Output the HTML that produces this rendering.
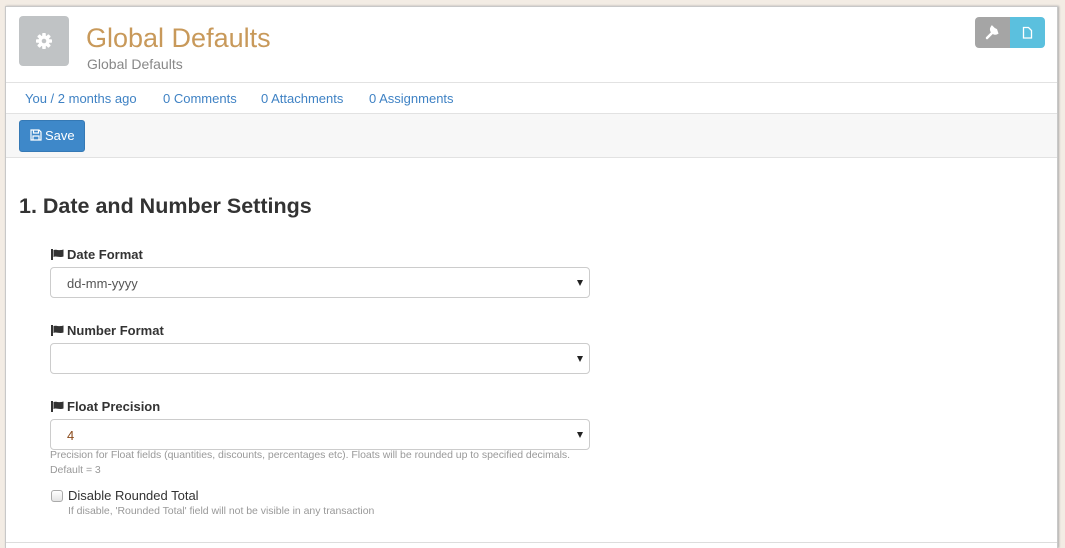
<!DOCTYPE html>
<html><head><style>
*{box-sizing:border-box;margin:0;padding:0}
html,body{width:1065px;height:548px;overflow:hidden}
body{background:#f3ece4;font-family:"Liberation Sans",sans-serif;position:relative}
.card{position:absolute;left:5px;top:6px;width:1053px;height:542px;background:#fff;border:1px solid #c8c8c8;border-bottom:none;box-shadow:1px 0 2px #aaa}
.abs{position:absolute}
.lnk{color:#3f82c4;font-size:13px;top:84px}
.lbl{font-weight:bold;font-size:13px;color:#333;left:45px}
.flag{display:inline-block;width:13px;height:11px;vertical-align:-1px;margin-right:3px}
.sel{left:44px;width:540px;height:31px;border:1px solid #ccc;border-radius:4px;font-size:13px;color:#555;padding:8px 0 0 16px}
.sel:after{content:"";position:absolute;right:6px;top:12px;border-left:3.5px solid transparent;border-right:3.5px solid transparent;border-top:6px solid #222}
.help{font-size:10.5px;color:#999;line-height:15px;white-space:nowrap;letter-spacing:-0.03px}
</style></head><body>
<div class="card">
 <div class="abs" style="left:13px;top:9px;width:50px;height:50px;background:#c0c3c5;border-radius:4px">
  <svg width="50" height="50" viewBox="0 0 50 50"><g fill="#fff" transform="translate(25 25)"><circle r="5.5"/><rect x="-1.8" y="-8" width="3.6" height="16" rx="0.8"/><rect x="-1.8" y="-8" width="3.6" height="16" rx="0.8" transform="rotate(45)"/><rect x="-1.8" y="-8" width="3.6" height="16" rx="0.8" transform="rotate(90)"/><rect x="-1.8" y="-8" width="3.6" height="16" rx="0.8" transform="rotate(135)"/><circle r="2.3" fill="#c0c3c5"/></g></svg>
 </div>
 <div class="abs" style="left:80px;top:16px;font-size:27px;color:#c8995a">Global Defaults</div>
 <div class="abs" style="left:81px;top:49px;font-size:14px;color:#888">Global Defaults</div>
 <div class="abs" style="left:969px;top:10px;width:35px;height:31px;background:#a5a5a5;border-radius:4px 0 0 4px"><svg width="35" height="31"><path d="M12 21 L18 15 M17 10 a4 4 0 0 0 5 6 l-1-3 -2-1z" stroke="#fff" stroke-width="2.5" fill="#fff" stroke-linecap="round"/></svg></div>
 <div class="abs" style="left:1004px;top:10px;width:35px;height:31px;background:#5bc0de;border-radius:0 4px 4px 0"><svg width="35" height="31"><path d="M13.5 10.5 h5 l3 3 v7.5 h-8z" stroke="#fff" stroke-width="1.3" fill="none"/></svg></div>
 <div class="abs" style="left:0;top:75px;width:100%;border-top:1px solid #e2e2e2"></div>
 <div class="abs lnk" style="left:19px">You / 2 months ago</div>
 <div class="abs lnk" style="left:157px">0 Comments</div>
 <div class="abs lnk" style="left:255px">0 Attachments</div>
 <div class="abs lnk" style="left:363px">0 Assignments</div>
 <div class="abs" style="left:0;top:106px;width:100%;height:45px;background:#f7f7f7;border-top:1px solid #e2e2e2;border-bottom:1px solid #e2e2e2"></div>
 <div class="abs" style="left:13px;top:113px;width:66px;height:32px;background:#3e88c9;border:1px solid #3579b5;border-radius:3px;color:#fff;font-size:13px;padding:7px 0 0 10px"><svg width="12" height="12" style="vertical-align:-1px;margin-right:3px"><path d="M1 1h8l2 2v8H1z M3.5 1v3h5V1 M3 11V7h6v4" stroke="#fff" stroke-width="1.2" fill="none"/></svg>Save</div>
 <div class="abs" style="left:13px;top:187px;font-size:21.5px;font-weight:bold;color:#333">1. Date and Number Settings</div>
 <div class="abs lbl" style="top:240px"><svg class="flag" viewBox="0 0 13 11"><path d="M0 0h2v11H0z M2.5 1 C5 0 8 2 12.5 0.5 V7.5 C8 9 5 6.5 2.5 8z" fill="#333"/></svg>Date Format</div>
 <div class="abs sel" style="top:260px">dd-mm-yyyy</div>
 <div class="abs lbl" style="top:316px"><svg class="flag" viewBox="0 0 13 11"><path d="M0 0h2v11H0z M2.5 1 C5 0 8 2 12.5 0.5 V7.5 C8 9 5 6.5 2.5 8z" fill="#333"/></svg>Number Format</div>
 <div class="abs sel" style="top:336px"></div>
 <div class="abs lbl" style="top:392px"><svg class="flag" viewBox="0 0 13 11"><path d="M0 0h2v11H0z M2.5 1 C5 0 8 2 12.5 0.5 V7.5 C8 9 5 6.5 2.5 8z" fill="#333"/></svg>Float Precision</div>
 <div class="abs sel" style="top:412px;color:#8a4a1a">4</div>
 <div class="abs help" style="left:44px;top:441px">Precision for Float fields (quantities, discounts, percentages etc). Floats will be rounded up to specified decimals.<br>Default = 3</div>
 <div class="abs" style="left:45px;top:483px;width:12px;height:12px;border:1px solid #aaa;border-radius:3px;background:linear-gradient(#fff,#e4e4e4)"></div>
 <div class="abs" style="left:62px;top:481px;font-size:13px;color:#333">Disable Rounded Total</div>
 <div class="abs help" style="left:62px;top:497px">If disable, 'Rounded Total' field will not be visible in any transaction</div>
 <div class="abs" style="left:0;top:535px;width:100%;border-top:1px solid #ddd"></div>
</div>
</body></html>
